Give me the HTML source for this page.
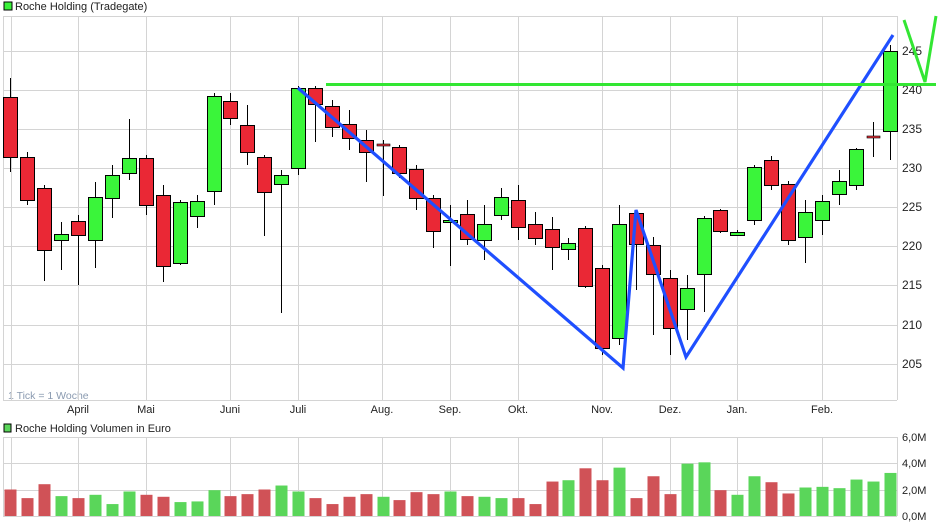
<!DOCTYPE html>
<html><head><meta charset="utf-8"><style>
body{margin:0;background:#fff;width:940px;height:526px;overflow:hidden;font-family:"Liberation Sans",sans-serif}
</style></head><body>
<svg id="s" width="940" height="526" xmlns="http://www.w3.org/2000/svg" font-family="Liberation Sans, sans-serif">
<rect width="940" height="526" fill="#fff"/>
<rect x="4" y="2" width="8" height="8" fill="#3af23a" stroke="#000" stroke-width="1"/>
<text x="15" y="10" font-size="11" fill="#222">Roche Holding (Tradegate)</text>
<rect x="4" y="424" width="7" height="8" fill="#5ad65a" stroke="#000" stroke-width="1"/>
<text x="15" y="432" font-size="11" fill="#222">Roche Holding Volumen in Euro</text>
<text x="8" y="399" font-size="10.5" fill="#8a9ab0">1 Tick = 1 Woche</text>
<g id="grid" stroke="#d4d4d4" stroke-width="1"></g>
<g id="c"></g>
<g id="v"></g>
<g font-size="11" fill="#222" id="lab"></g>
<polyline points="298,88 623,368 636,210 686,357 893,35" fill="none" stroke="#1f4fff" stroke-width="3.2" stroke-linejoin="miter"/>
<line x1="326" y1="84.5" x2="936" y2="84.5" stroke="#33e633" stroke-width="3"/>
<polyline points="904,20 925,82 936,16" fill="none" stroke="#33e633" stroke-width="3"/>
</svg>
<script>
var ns="http://www.w3.org/2000/svg";
function el(p,t,a,txt){var e=document.createElementNS(ns,t);for(var k in a)e.setAttribute(k,a[k]);if(txt)e.textContent=txt;document.getElementById(p).appendChild(e);return e;}
// grid price panel
var hy=[16,51,90,129,168,207,246,285,325,364];
hy.forEach(function(y){el('grid','line',{x1:3,x2:897,y1:y+.5,y2:y+.5});});
var vx=[11,78,146,230,298,382,450,518,602,670,737,822,897];
vx.forEach(function(x){el('grid','line',{x1:x+.5,x2:x+.5,y1:16,y2:400});});
el('grid','line',{x1:3.5,x2:3.5,y1:16,y2:400});
el('grid','line',{x1:3,x2:897,y1:400.5,y2:400.5});
// volume grid
[437,463,490,516].forEach(function(y){el('grid','line',{x1:3,x2:897,y1:y+.5,y2:y+.5});});
vx.forEach(function(x){el('grid','line',{x1:x+.5,x2:x+.5,y1:437,y2:516});});
el('grid','line',{x1:3.5,x2:3.5,y1:437,y2:516});
// labels
var pl=[[245,51],[240,90],[235,129],[230,168],[225,207],[220,246],[215,285],[210,325],[205,364]];
pl.forEach(function(p){el('lab','text',{x:902,y:p[1]+4,'font-size':12},String(p[0]));});
[["6,0M",437],["4,0M",463],["2,0M",490],["0,0M",516]].forEach(function(p){el('lab','text',{x:902,y:p[1]+4,'font-size':11},p[0]);});
[["April",78],["Mai",146],["Juni",230],["Juli",298],["Aug.",382],["Sep.",450],["Okt.",518],["Nov.",602],["Dez.",670],["Jan.",737],["Feb.",822]].forEach(function(p){el('lab','text',{x:p[1],y:413,'text-anchor':'middle'},p[0]);});
// candles: x,o(top),c(bottom),hi,lo,color
var C=[[10,97,157,78,172,'r'],[27,157,200,152,205,'r'],[44,188,250,185,281,'r'],[61,234,240,222,270,'g'],[78,221,235,215,285,'r'],[95,197,240,182,268,'g'],[112,175,198,165,218,'g'],[129,158,173,119,180,'g'],[146,158,205,155,215,'r'],[163,195,266,185,282,'r'],[180,202,263,200,265,'g'],[197,201,216,195,228,'g'],[214,96,191,93,205,'g'],[230,101,118,93,125,'r'],[247,125,152,105,165,'r'],[264,157,192,155,236,'r'],[281,175,184,170,313,'g'],[298,88,168,86,175,'g'],[315,88,104,86,142,'r'],[332,106,127,100,137,'r'],[349,124,138,110,150,'r'],[366,140,152,130,182,'r'],[383,145,146,140,196,'k'],[399,147,173,145,178,'r'],[416,169,198,165,210,'r'],[433,198,231,195,248,'r'],[450,220,222,205,266,'g'],[467,214,239,200,245,'r'],[484,224,240,205,260,'g'],[501,197,215,188,220,'g'],[518,200,227,185,240,'r'],[535,224,238,212,245,'r'],[552,229,247,217,270,'r'],[568,243,249,238,260,'g'],[585,228,286,226,288,'r'],[602,268,348,265,355,'r'],[619,224,338,205,345,'g'],[636,213,244,210,290,'r'],[653,245,274,237,335,'r'],[670,278,328,270,355,'r'],[687,288,309,275,340,'g'],[704,218,274,216,312,'g'],[720,210,231,209,233,'r'],[737,232,235,230,236,'g'],[754,167,220,165,225,'g'],[771,160,185,156,190,'r'],[788,184,240,181,245,'r'],[805,212,237,200,263,'g'],[822,201,220,195,235,'g'],[839,181,194,170,205,'g'],[856,149,185,148,190,'g'],[873,137,138,122,157,'k'],[890,51,131,45,160,'g']];
C.forEach(function(c){
 el('c','line',{x1:c[0]+.5,x2:c[0]+.5,y1:c[3],y2:c[4],stroke:'#000','stroke-width':1});
 if(c[5]=='k'){el('c','rect',{x:c[0]-6,y:c[1]-1,width:13,height:2,fill:'#e8303a',stroke:'#000','stroke-width':.6});return;}
 el('c','rect',{x:c[0]-6.5,y:c[1]+.5,width:14,height:Math.max(2,c[2]-c[1]),fill:c[5]=='r'?'#ea2835':'#3af53a',stroke:'#000','stroke-width':1});
});
var V=[2.0,1.35,2.4,1.5,1.35,1.6,0.9,1.85,1.6,1.45,1.05,1.1,1.95,1.5,1.65,2.0,2.3,1.85,1.35,0.9,1.45,1.65,1.45,1.2,1.8,1.65,1.85,1.5,1.45,1.35,1.35,0.9,2.6,2.7,3.6,2.7,3.65,1.35,3.0,1.65,3.95,4.05,1.95,1.6,3.0,2.55,1.7,2.15,2.2,2.1,2.75,2.6,3.25];
var VC="rrrgrgggrrgggrrrggrrrrgrrrgrggrrrgrrgrrrggrggrrgggggg";
V.forEach(function(v,i){var h=v*13.25;el('v','rect',{x:C[i][0]-5.5,y:516-h,width:12,height:h,fill:VC[i]=='r'?'#d05257':'#5ad65a'});});
</script>
</body></html>
